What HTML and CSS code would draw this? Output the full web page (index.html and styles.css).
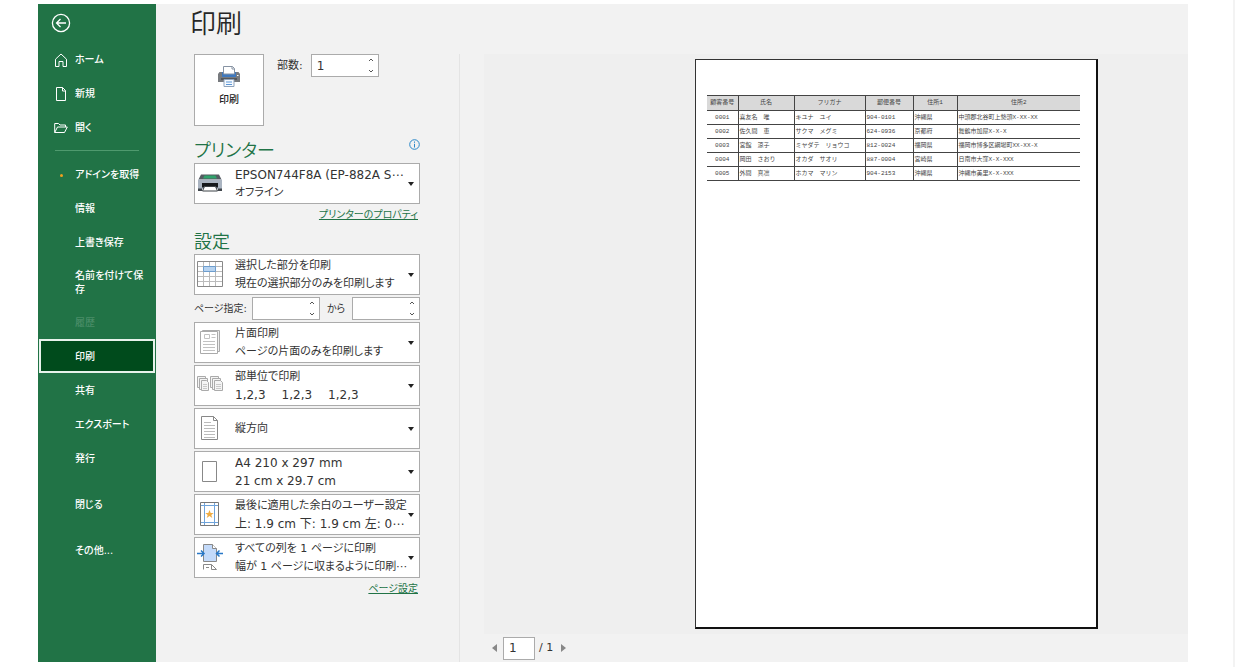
FILE: index.html
```html
<!DOCTYPE html>
<html lang="ja">
<head>
<meta charset="utf-8">
<meta name="viewport" content="width=device-width, initial-scale=1">
<title>印刷</title>
<link rel="stylesheet" href="styles.css">
</head>
<body>
<div class="app">
  <nav class="sidebar" aria-label="ファイル">
    <button class="back" type="button" aria-label="戻る">
      <svg width="20" height="20" viewBox="0 0 20 20" fill="none" stroke="currentColor" stroke-width="1.3"><circle cx="10" cy="10" r="8.6"/><path d="M15 10H5.5M9.5 6l-4 4 4 4"/></svg>
    </button>
    <a class="item" href="#"><span class="mark"><svg width="14" height="16" viewBox="0 0 14 16" fill="none" stroke="currentColor"><path d="M1.5 7.2 7 2l5.500 5.200V14.500H9V9.500H5v5H1.500z"/></svg></span>ホーム</a>
    <a class="item" href="#"><span class="mark"><svg width="14" height="16" viewBox="0 0 14 16" fill="none" stroke="currentColor"><path d="M2.500 1.500h6l3 3v10h-9zM8.500 1.500v3.500h3"/></svg></span>新規</a>
    <a class="item" href="#"><span class="mark"><svg width="14" height="16" viewBox="0 0 14 16" fill="none" stroke="currentColor"><path d="M.7 12.500v-9h3.800l1.500 1.500h5.500v2M.7 12.500l2.800-5.500h9.800l-2.800 5.500z"/></svg></span>開く</a>
    <hr class="rule">
    <a class="item" href="#"><span class="mark"><span class="dot"></span></span>アドインを取得</a>
    <a class="item" href="#">情報</a>
    <a class="item" href="#">上書き保存</a>
    <a class="item tall" href="#">名前を付けて保存</a>
    <a class="item disabled" aria-disabled="true">履歴</a>
    <a class="item current" href="#" aria-current="page">印刷</a>
    <a class="item" href="#">共有</a>
    <a class="item" href="#">エクスポート</a>
    <a class="item" href="#">発行</a>
    <a class="item spaced" href="#">閉じる</a>
    <a class="item spaced" href="#">その他...</a>
  </nav>

  <main class="main">
    <h1 class="title">印刷</h1>
    <div class="content">
      <form class="settings">
        <div class="top">
          <button class="print" type="button">
            <svg width="24" height="22" viewBox="0 0 24 22"><path d="M2.500 6h19L23 8v8H1V8z" fill="#777a7e"/><path d="M5 6h14v5H5z" fill="#3f78bd"/><path d="M6.500.500h9l2 2V8h-11z" fill="#fff" stroke="#8793a3"/><path d="M15 .500V3h2.500" fill="none" stroke="#8793a3"/><path d="M4 12h16v2H4z" fill="#55585c"/><path d="M7 13.500h10v7H7z" fill="#f4f9ff" stroke="#90a3ba"/><path d="M9 16h6M9 18.500h6" stroke="#5c96d5"/><path d="M20 9.500h1.500" stroke="#fff"/></svg>
            印刷
          </button>
          <label class="copies-label" for="copies">部数:</label>
          <span class="spin"><input id="copies" type="text" inputmode="numeric" value="1"><span class="steps"><button type="button" aria-label="増やす"><svg width="6" height="4" viewBox="0 0 6 4"><path d="M1 3l2-2 2 2"/></svg></button><button type="button" aria-label="減らす"><svg width="6" height="4" viewBox="0 0 6 4"><path d="M1 1l2 2 2-2"/></svg></button></span></span>
        </div>

        <div class="heading">
          <h2>プリンター</h2>
          <button class="info" type="button" aria-label="プリンターの情報"><svg width="11" height="11" viewBox="0 0 11 11" fill="none" stroke="#2b88c8"><circle cx="5.500" cy="5.500" r="4.800"/><path d="M5.500 4.800V8.500M5.500 2.500V3.800"/></svg></button>
        </div>
        <div class="picker">
          <svg class="icon" width="26" height="26" viewBox="0 0 26 26"><path d="M4 4.500h18l2.500 5h-23z" fill="#555b61"/><path d="M1 9.500h24V19H1z" fill="#aab4c1"/><path d="M7.500 5.500h11l1.500 3H6z" fill="#2fa36b"/><path d="M5 13h16v4.500H5z" fill="#16191c"/><path d="M7.500 16.500h11l2 4.500h-15z" fill="#fff" stroke="#3d4247"/><path d="M1 18.500h4V21H1zM21 18.500h4V21h-4z" fill="#40464c"/></svg>
          <select class="latin" aria-label="プリンター"><option>EPSON744F8A (EP-882A S⋯</option></select>
          <span class="desc">オフライン</span>
        </div>
        <a class="link" href="#">プリンターのプロパティ</a>

        <div class="heading second"><h2>設定</h2></div>
        <div class="group">
          <div class="picker">
            <svg class="icon" width="26" height="26" viewBox="0 0 26 26" fill="none"><path d="M.5.5h25v25H.5z" fill="#fff"/><path d="M.500 5.500h25M.500 10.500h25M.500 15.500h25M.500 20.500h25M6.500 .500v25M12.500 .500v25M18.500 .500v25" stroke="#bbb"/><path d="M.500.500h25v25H.500z" stroke="#888"/><path d="M6.500 5.500h12v5h-12z" fill="#b7d3f0" stroke="#6d9dcd"/></svg>
            <select aria-label="印刷対象"><option>選択した部分を印刷</option></select>
            <span class="desc">現在の選択部分のみを印刷します</span>
          </div>
          <div class="pages">
            <label for="from">ページ指定:</label>
            <span class="spin"><input id="from" type="text" inputmode="numeric"><span class="steps"><button type="button" aria-label="増やす"><svg width="6" height="4" viewBox="0 0 6 4"><path d="M1 3l2-2 2 2"/></svg></button><button type="button" aria-label="減らす"><svg width="6" height="4" viewBox="0 0 6 4"><path d="M1 1l2 2 2-2"/></svg></button></span></span>
            <label class="until" for="to">から</label>
            <span class="spin"><input id="to" type="text" inputmode="numeric"><span class="steps"><button type="button" aria-label="増やす"><svg width="6" height="4" viewBox="0 0 6 4"><path d="M1 3l2-2 2 2"/></svg></button><button type="button" aria-label="減らす"><svg width="6" height="4" viewBox="0 0 6 4"><path d="M1 1l2 2 2-2"/></svg></button></span></span>
          </div>
          <div class="picker">
            <svg class="icon" width="26" height="26" viewBox="0 0 26 26" fill="#fff" stroke="#aaa"><path d="M5.500 1.500h17v21h-17z" fill="#eee"/><path d="M3.500 2.500h17v22h-17z"/><path d="M7.500 5.500h5v4h-5zM14.500 5.500h4M14.500 8.500h4M6 12.500h12M6 15.500h12M6 18.500h12M6 21.500h12" stroke="#c2c2c2"/></svg>
            <select aria-label="印刷面"><option>片面印刷</option></select>
            <span class="desc">ページの片面のみを印刷します</span>
          </div>
          <div class="picker">
            <svg class="icon" width="26" height="26" viewBox="0 0 26 26" fill="#f4f4f4" stroke="#aaa"><path d="M.500 4.500h8v11h-8z"/><path d="M2.500 6.500h8v11h-8z"/><path d="M4.500 8.500h5l2 2v8h-7z"/><path d="M13.500 4.500h8v11h-8z"/><path d="M15.500 6.500h8v11h-8z"/><path d="M17.500 8.500h6l2 2v8h-8z"/><path d="M6 12.500h4M6 14.500h4M6 16.500h4M19 12.500h5M19 14.500h5M19 16.500h5" stroke="#c8c8c8"/></svg>
            <select aria-label="印刷順"><option>部単位で印刷</option></select>
            <span class="desc latin sets"><span>1,2,3</span><span>1,2,3</span><span>1,2,3</span></span>
          </div>
          <div class="picker single">
            <svg class="icon" width="26" height="26" viewBox="0 0 26 26" fill="#fff" stroke="#888"><path d="M4.500 1.500h12l4 4v19h-16z"/><path d="M16.500 1.500v4h4" fill="none"/><path d="M7 7.500h7M7 10.500h11M7 13.500h11M7 16.500h11M7 19.500h11M7 22.500h11" stroke="#bbb"/></svg>
            <select aria-label="印刷の向き"><option>縦方向</option></select>
          </div>
          <div class="picker">
            <svg class="icon" width="26" height="26" viewBox="0 0 26 26" fill="#fff" stroke="#888"><path d="M5.500 3.500h14v20h-14z"/></svg>
            <select class="latin" aria-label="用紙サイズ"><option>A4 210 x 297 mm</option></select>
            <span class="desc latin">21 cm x 29.7 cm</span>
          </div>
          <div class="picker">
            <svg class="icon" width="26" height="26" viewBox="0 0 26 26" fill="none"><path d="M3.500 1.500h18v23h-18z" fill="#fff" stroke="#777"/><path d="M7.500 2v22M17.500 2v22M4 4.500h17M4 21.500h17" stroke="#6fa3da"/><path d="m12.500 9 1.200 3h3l-2.400 1.900 1 3.100-2.800-1.900-2.800 1.900 1-3.100L8.300 12h3z" fill="#efad45"/></svg>
            <select aria-label="余白"><option>最後に適用した余白のユーザー設定</option></select>
            <span class="desc latin">上: 1.9 cm 下: 1.9 cm 左: 0⋯</span>
          </div>
          <div class="picker">
            <svg class="icon" width="26" height="26" viewBox="0 0 26 26" fill="none"><path d="M6.500.500h9l4 4v13h-13z" fill="#c3dafa" stroke="#888"/><path d="M15.500.500v4h4" fill="#fff" stroke="#888"/><path d="M6.500 25.500v-5h8l5 5M14.500 20.500v5h5M9 23.500h3" stroke="#888"/><path d="M0 9.500h7M4 6.500l3 3-3 3M26 9.500h-6M22.500 6.500l-3 3 3 3" stroke="#2878c8" stroke-width="1.500"/></svg>
            <select aria-label="拡大縮小"><option>すべての列を 1 ページに印刷</option></select>
            <span class="desc">幅が 1 ページに収まるように印刷⋯</span>
          </div>
        </div>
        <a class="link" href="#">ページ設定</a>
      </form>

      <section class="preview" aria-label="印刷プレビュー">
        <div class="stage">
          <div class="paper">
            <table>
              <colgroup><col class="c1"><col class="c2"><col class="c3"><col class="c4"><col class="c5"><col></colgroup>
              <thead><tr><th>顧客番号</th><th>氏名</th><th>フリガナ</th><th>郵便番号</th><th>住所1</th><th>住所2</th></tr></thead>
              <tbody>
                <tr><td>0001</td><td>喜友名　唯</td><td>キユナ　ユイ</td><td>904-0101</td><td>沖縄県</td><td>中頭郡北谷町上勢頭X-XX-XX</td></tr>
                <tr><td>0002</td><td>佐久間　恵</td><td>サクマ　メグミ</td><td>624-0936</td><td>京都府</td><td>舞鶴市加屋X-X-X</td></tr>
                <tr><td>0003</td><td>宮館　涼子</td><td>ミヤダテ　リョウコ</td><td>812-0024</td><td>福岡県</td><td>福岡市博多区綱場町XX-XX-X</td></tr>
                <tr><td>0004</td><td>岡田　さおり</td><td>オカダ　サオリ</td><td>887-0004</td><td>宮崎県</td><td>日南市大窪X-X-XXX</td></tr>
                <tr><td>0005</td><td>外間　真凛</td><td>ホカマ　マリン</td><td>904-2153</td><td>沖縄県</td><td>沖縄市美里X-X-XXX</td></tr>
              </tbody>
            </table>
          </div>
        </div>
        <div class="pager">
          <button type="button" aria-label="前のページ"><svg width="5" height="8" viewBox="0 0 5 8"><path d="M5 0v8L0 4z"/></svg></button>
          <input type="text" value="1" aria-label="ページ番号">
          <span>/ 1</span>
          <button type="button" aria-label="次のページ"><svg width="5" height="8" viewBox="0 0 5 8"><path d="M0 0v8l5-4z"/></svg></button>
        </div>
      </section>
    </div>
  </main>
</div>
</body>
</html>
```
FILE: styles.css
```css
* { box-sizing: border-box; }

body {
  margin: 0;
  min-height: 100vh;
  display: flex;
  padding: 4px 45px 5px 38px;
  border-right: 2px solid #f3f3f3;
  background: #fff;
  color: #333;
  font: 11px/18px "DejaVu Sans", "Noto Sans CJK JP", sans-serif;
  font-feature-settings: "palt";
}

button, input, select {
  margin: 0;
  padding: 0;
  border: 0;
  background: none;
  color: inherit;
  font: inherit;
  font-feature-settings: inherit;
}

h1, h2 { margin: 0; }
svg { display: block; }

.app { flex: 1; display: flex; background: #f2f2f2; }

/* Sidebar */
.sidebar {
  flex: 0 0 118px;
  display: flex;
  flex-direction: column;
  background: #217346;
  color: #fff;
  font-size: 10px;
  line-height: 14px;
}
.back { align-self: flex-start; margin: 9px 0 9px 13px; }
.item {
  display: flex;
  align-items: center;
  min-height: 34px;
  padding: 2px 8px 0 37px;
  color: inherit;
  font-weight: 500;
  text-decoration: none;
}
.mark { flex: none; width: 14px; margin: 0 7px 0 -21px; }
.dot { display: block; width: 3px; height: 3px; margin: 0 auto; border-radius: 50%; background: #f0a01e; }
.rule { align-self: stretch; margin: 6px 17px; border: 0; border-top: 1px solid #4f9a6e; }
.tall { min-height: 46px; }
.spaced { margin-top: 12px; }
.disabled { color: #4a8d68; }
.current {
  margin: 0 1px;
  padding-left: 34px;
  border: 2px solid #e8f3ec;
  background: #004b1c;
}

/* Main area */
.main { flex: 1; min-width: 0; display: flex; flex-direction: column; }
.title {
  margin-bottom: 10px;
  padding-left: 34px;
  color: #262626;
  font-size: 26px;
  font-weight: 350;
  line-height: 40px;
}
.content { flex: 1; display: flex; }
.settings {
  flex: none;
  width: 304px;
  display: flex;
  flex-direction: column;
  padding: 0 39px 0 38px;
  border-right: 1px solid #e4e4e4;
}
.top { display: flex; align-items: flex-start; }
.print {
  width: 70px;
  height: 72px;
  display: flex;
  flex-direction: column;
  align-items: center;
  justify-content: center;
  padding-bottom: 6px;
  border: 1px solid #ababab;
  background: #fff;
  color: #222;
  font-size: 10px;
  font-weight: 500;
  gap: 3px;
}
.copies-label { margin: 3px 8px 0 13px; }
.spin {
  flex: none;
  width: 68px;
  height: 23px;
  display: flex;
  border: 1px solid #ababab;
  background: #fff;
}
.spin input { flex: 1; min-width: 0; padding-left: 5px; font-size: 12px; }
.steps { width: 14px; display: flex; flex-direction: column; justify-content: space-between; padding: 3px 0; }
.steps svg { fill: none; stroke: #555; margin: 0 auto; }
.steps button { display: block; width: 14px; }

.heading { display: flex; justify-content: space-between; margin-top: 13px; }
.heading h2 { color: #217346; font-size: 18px; font-weight: 350; line-height: 24px; }
.heading.second { margin-top: 6px; }
.info { align-self: flex-start; }

.picker {
  position: relative;
  height: 41px;
  display: grid;
  grid-template-columns: minmax(0, 1fr);
  grid-template-rows: 19px 18px;
  align-content: center;
  border: 1px solid #ababab;
  background: #fff;
}
.picker::after {
  content: "";
  position: absolute;
  right: 5px;
  top: 18px;
  border: 3px solid transparent;
  border-top: 4px solid #222;
  border-bottom: 0;
  pointer-events: none;
}
.icon { position: absolute; left: 2px; top: 6px; pointer-events: none; }
.picker select {
  width: 100%;
  padding-left: 40px;
  appearance: none;
}
.desc { padding-left: 40px; white-space: nowrap; }
.picker .latin { font-size: 12px; }
.sets { display: flex; gap: 16px; }
.single { grid-template-rows: 37px; }
.group { display: flex; flex-direction: column; gap: 2px; }
.pages { display: flex; align-items: center; font-size: 10px; }
.pages label { flex: 0 0 32px; text-align: center; white-space: nowrap; }
.pages label:first-child { flex: 1; text-align: left; }
.link { align-self: flex-end; margin: 2px 2px 0 0; color: #217346; font-size: 10px; }

/* Preview */
.preview {
  flex: 1;
  min-width: 0;
  display: flex;
  flex-direction: column;
  padding-left: 24px;
}
.stage {
  flex: 1;
  display: flex;
  justify-content: center;
  padding: 5px 0 4px 121px;
  background: #efefef;
}
.paper {
  width: 403px;
  aspect-ratio: 403 / 570;
  align-self: flex-start;
  padding: 35px 16px 0 11px;
  border: 1px solid #333;
  border-right: 2px solid #111;
  border-bottom: 2px solid #111;
  background: #fff;
}
table {
  width: 100%;
  table-layout: fixed;
  border-collapse: collapse;
  color: #444;
  font: 6px/8px "Liberation Mono", "Noto Sans CJK JP", monospace;
  font-feature-settings: normal;
}
.c1 { width: 31px; }
.c2 { width: 56px; }
.c3 { width: 71px; }
.c4 { width: 48px; }
.c5 { width: 44px; }
th, td {
  height: 14px;
  padding: 0 1px;
  border: 1px solid #444;
  font-weight: 400;
  text-align: left;
  white-space: nowrap;
}
th { height: 15px; background: #d9d9d9; text-align: center; }
th:first-child, td:first-child { border-left: 0; text-align: center; }
th:last-child, td:last-child { border-right: 0; }

.pager { display: flex; align-items: center; height: 28px; padding-left: 8px; }
.pager input { width: 32px; height: 23px; margin: 0 4px 0 6px; padding-left: 5px; border: 1px solid #ababab; background: #fff; font-size: 12px; }
.pager span + button { margin-left: 8px; }
.pager svg { fill: #888; }
```
